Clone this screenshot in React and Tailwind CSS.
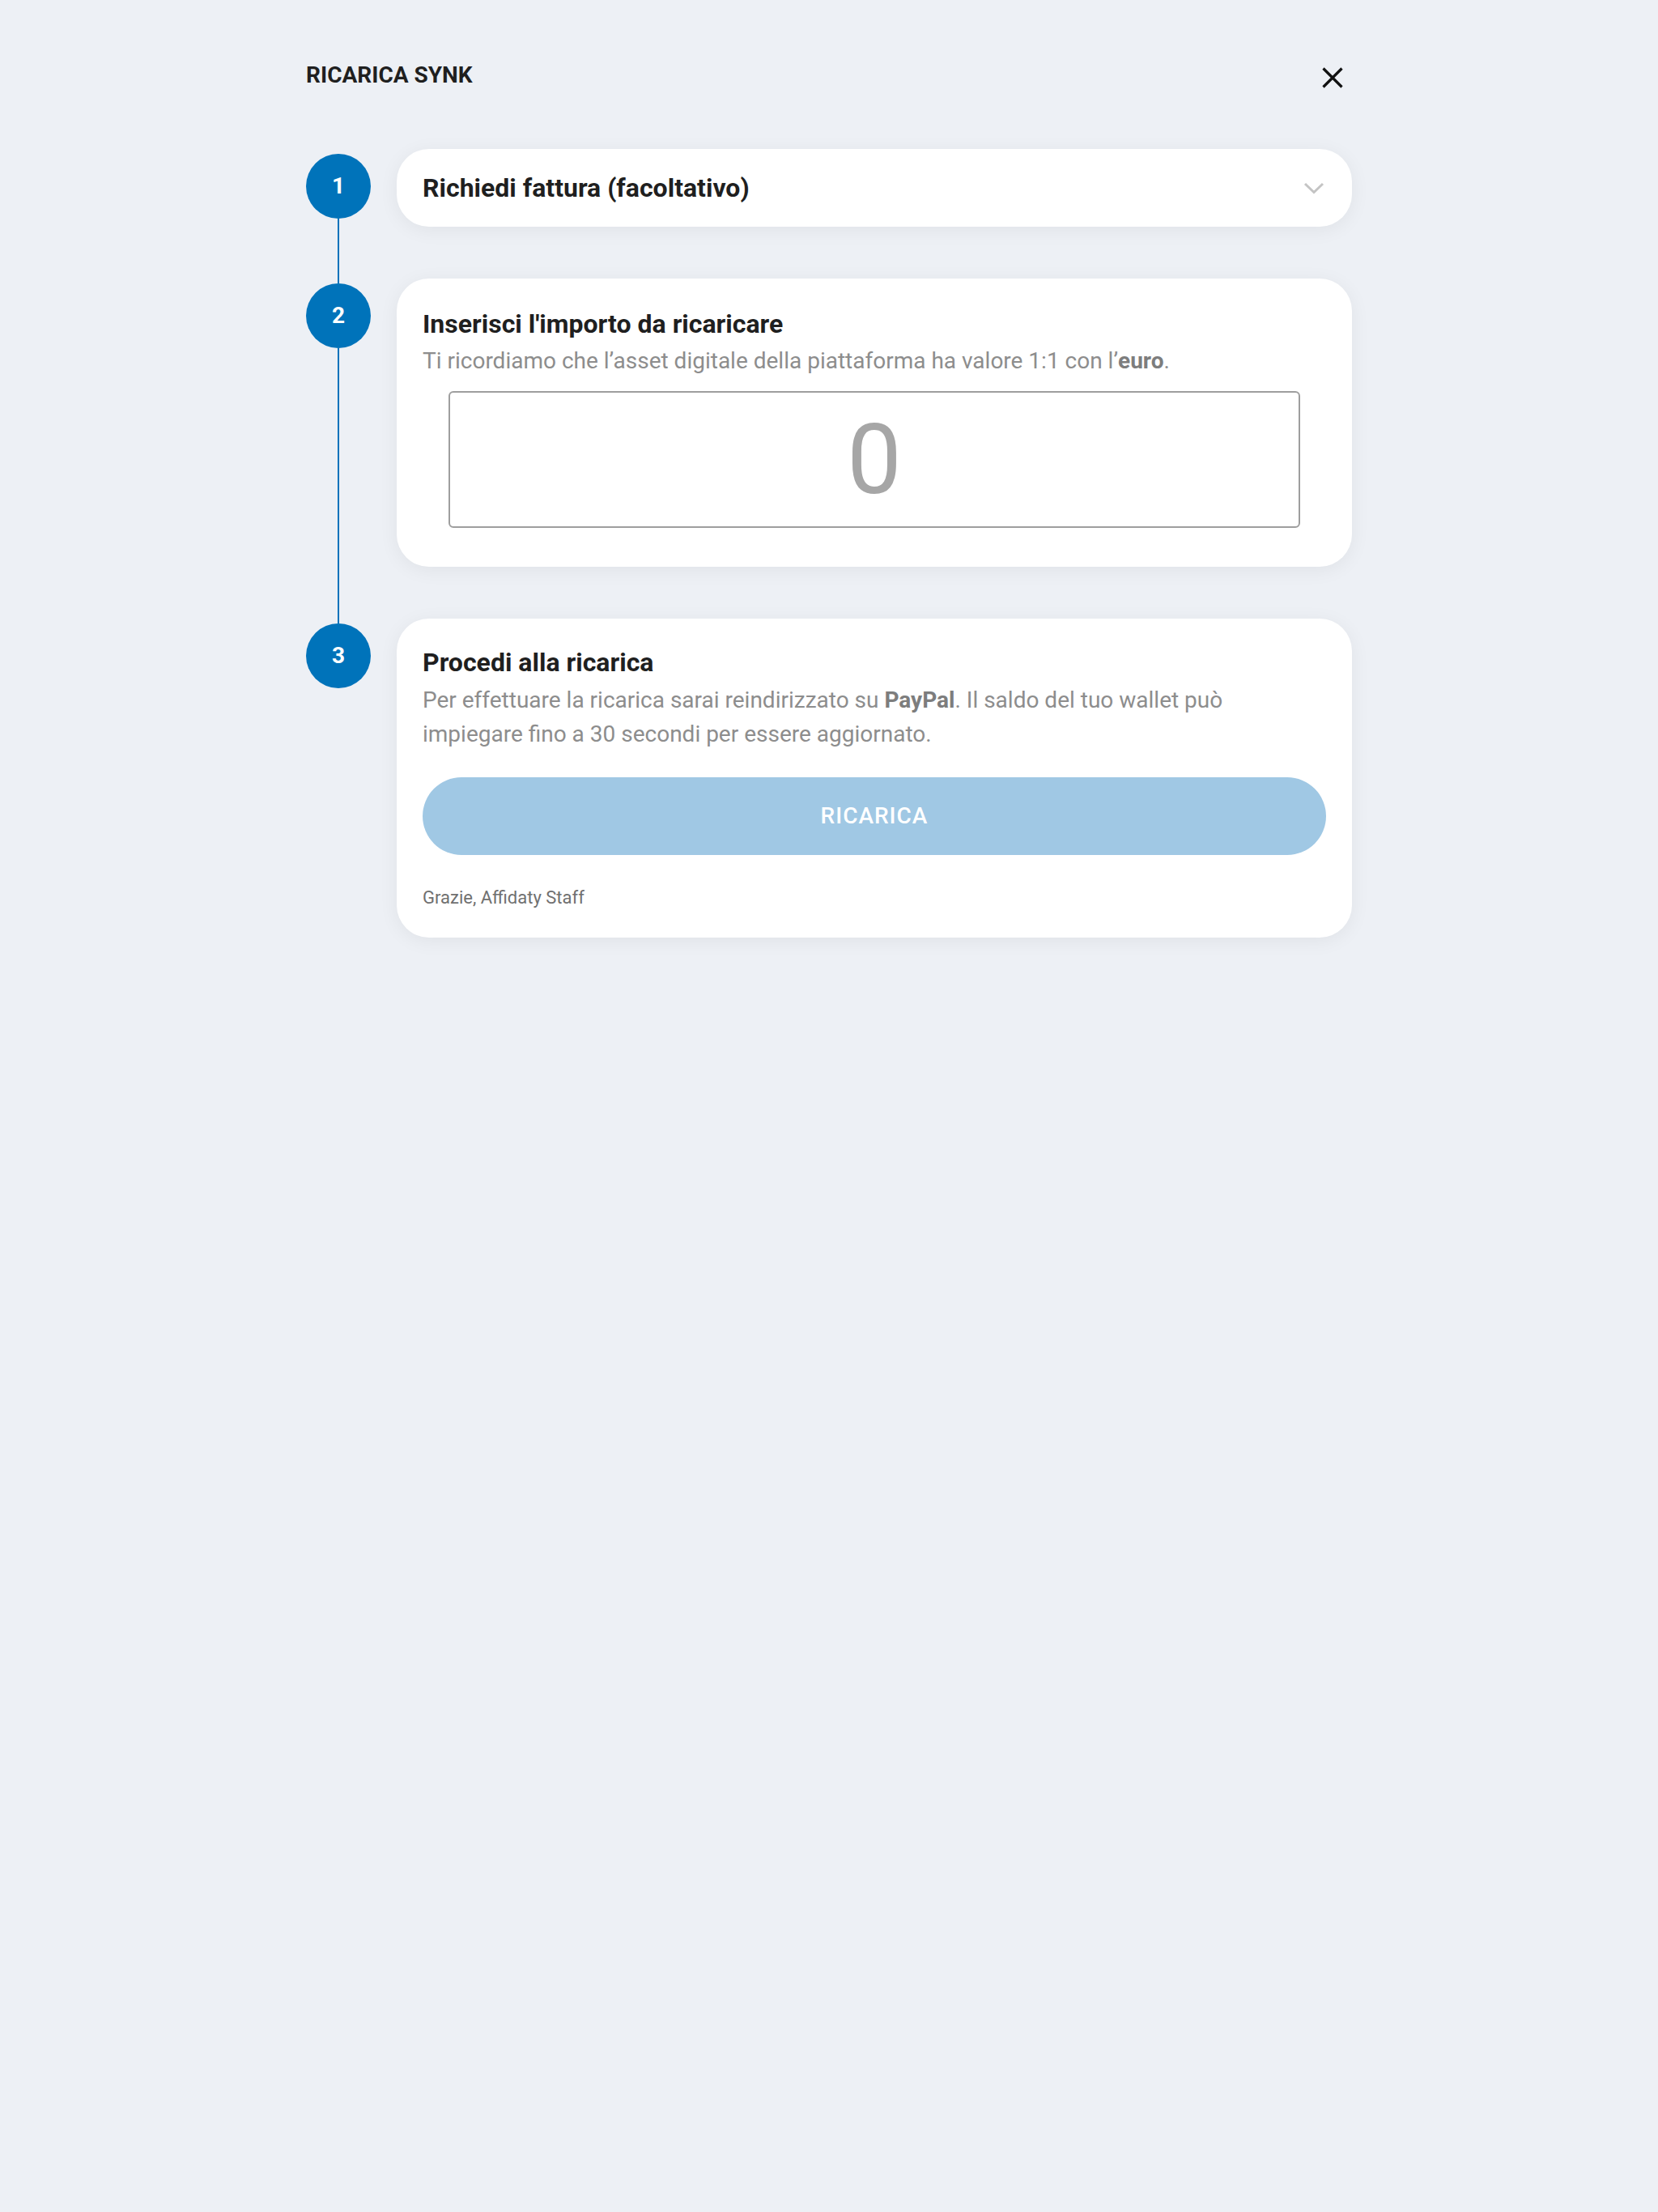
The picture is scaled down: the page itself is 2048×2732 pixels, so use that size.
function Step({ n, first, last, children }) {
  return (
    <div className="flex gap-8">
      <div className="flex w-20 shrink-0 flex-col items-center">
        <div className={`w-[2px] h-[6px] ${first ? '' : 'bg-[#0072bb]'}`} />
        <div className="flex h-20 w-20 items-center justify-center rounded-full bg-[#0073ba] text-[28px] font-bold text-white">
          {n}
        </div>
        {!last && <div className="w-[2px] flex-1 bg-[#0072bb]" />}
      </div>
      <div className={`flex-1 ${last ? '' : 'pb-16'}`}>{children}</div>
    </div>
  )
}

export default function App() {
  return (
    <div className="min-h-[2732px] bg-[#edf0f5] font-['Roboto',sans-serif]">
      <div className="mx-auto w-[1292px]">
        <div className="flex items-start justify-between pt-[72px]">
          <h1 className="text-[28px] leading-[42px] font-bold text-[#1f1f1f]">RICARICA SYNK</h1>
          <button className="flex h-12 w-12 items-center justify-center">
            <svg width="26" height="26" viewBox="0 0 26 26">
              <path d="M1.5 1.5L24.5 24.5M24.5 1.5L1.5 24.5" stroke="#111" strokeWidth="3.2" />
            </svg>
          </button>
        </div>

        <div className="mt-16">
          <Step n={1} first>
            <div className="flex h-24 items-center justify-between rounded-[40px] bg-white pl-8 pr-8 shadow-[0_4px_24px_rgba(0,0,0,0.06)]">
              <span className="text-[32px] font-bold text-[#1f1f1f]">Richiedi fattura (facoltativo)</span>
              <svg width="26" height="15" viewBox="0 0 26 15" className="mr-[2px]">
                <path d="M2 2L13 12.5L24 2" fill="none" stroke="#c4c4c4" strokeWidth="3" />
              </svg>
            </div>
          </Step>

          <Step n={2}>
            <div className="rounded-[40px] bg-white px-8 pt-9 pb-12 shadow-[0_4px_24px_rgba(0,0,0,0.06)]">
              <h2 className="text-[32px] leading-[40px] font-bold text-[#1f1f1f]">Inserisci l'importo da ricaricare</h2>
              <p className="mt-[5px] text-[28px] leading-[42px] text-[#8d8d8d]">
                Ti ricordiamo che l’asset digitale della piattaforma ha valore 1:1 con l’<span className="font-bold text-[#7d7d7d]">euro</span>.
              </p>
              <div className="mx-8 mt-4 flex h-[169px] items-center justify-center rounded-md border-2 border-[#9e9e9e]">
                <span className="text-[120px] leading-none text-[#a6a6a6]">0</span>
              </div>
            </div>
          </Step>

          <Step n={3} last>
            <div className="rounded-[40px] bg-white px-8 pt-[34px] pb-[33px] shadow-[0_4px_24px_rgba(0,0,0,0.06)]">
              <h2 className="text-[32px] leading-[40px] font-bold text-[#1f1f1f]">Procedi alla ricarica</h2>
              <p className="mt-[6px] text-[28px] leading-[42px] text-[#8d8d8d]">
                Per effettuare la ricarica sarai reindirizzato su <span className="font-bold text-[#7d7d7d]">PayPal</span>. Il saldo del tuo wallet può impiegare fino a 30 secondi per essere aggiornato.
              </p>
              <button className="mt-8 flex h-24 w-full items-center justify-center rounded-full bg-[#a0c8e4] text-[28px] font-medium tracking-[1px] text-white">
                RICARICA
              </button>
              <p className="mt-9 text-[22px] leading-[33px] text-[#707070]">Grazie, Affidaty Staff</p>
            </div>
          </Step>
        </div>
      </div>
    </div>
  )
}
